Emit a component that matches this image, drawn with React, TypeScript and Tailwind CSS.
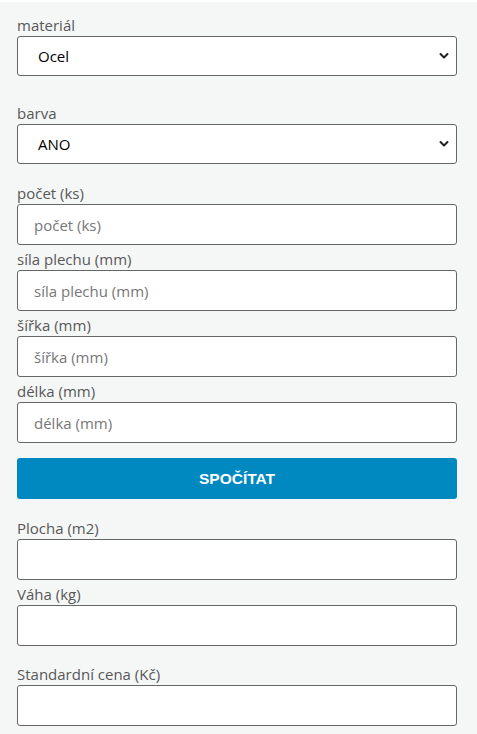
import React from "react";

const labelCls = "block pt-1 mb-px text-[15px] leading-5 text-[#585858]";
const boxCls =
  "block w-full h-[41px] rounded-[3px] border border-[#666] bg-white px-4 text-[15px] text-black placeholder:text-[#777] outline-none";

function Chevron() {
  return (
    <svg
      className="pointer-events-none absolute right-[8px] top-1/2 -translate-y-1/2"
      width="10"
      height="7"
      viewBox="0 0 10 7"
      fill="none"
    >
      <path d="M1.5 1.5 L5 5 L8.5 1.5" stroke="#222" strokeWidth="2" strokeLinecap="round" strokeLinejoin="round" />
    </svg>
  );
}

function SelectField({ label, value, options }: { label: string; value: string; options: string[] }) {
  return (
    <div>
      <label className={labelCls}>{label}</label>
      <div className="relative">
        <select
          defaultValue={value}
          className="block w-full h-[40px] appearance-none rounded-[3px] border border-[#666] bg-white pl-5 pr-8 text-[15px] text-black outline-none"
        >
          {options.map((o) => (
            <option key={o}>{o}</option>
          ))}
        </select>
        <Chevron />
      </div>
    </div>
  );
}

function InputField({ label, placeholder = "" }: { label: string; placeholder?: string }) {
  return (
    <div>
      <label className={labelCls}>{label}</label>
      <input type="text" placeholder={placeholder} className={boxCls} />
    </div>
  );
}

export default function App() {
  return (
    <div
      className="min-h-[734px] w-full border-t-2 border-white bg-[#f5f7f7] pl-[17px] pr-[20px] pt-[9px]"
      style={{ fontFamily: '"Open Sans", "Noto Sans", sans-serif' }}
    >
      <SelectField label="materiál" value="Ocel" options={["Ocel", "Nerez", "Hliník"]} />
      <div className="mt-[23px]">
        <SelectField label="barva" value="ANO" options={["ANO", "NE"]} />
      </div>
      <div className="mt-[15px]">
        <InputField label="počet (ks)" placeholder="počet (ks)" />
      </div>
      <InputField label="síla plechu (mm)" placeholder="síla plechu (mm)" />
      <InputField label="šířka (mm)" placeholder="šířka (mm)" />
      <InputField label="délka (mm)" placeholder="délka (mm)" />
      <button
        type="button"
        className="mt-[15px] block h-[41px] w-full rounded-[3px] bg-[#0088c1] text-[15.5px] font-bold text-white"
        style={{ fontFamily: '"Liberation Sans", Arial, sans-serif' }}
      >
        SPOČÍTAT
      </button>
      <div className="mt-[15px]">
        <InputField label="Plocha (m2)" />
      </div>
      <InputField label="Váha (kg)" />
      <div className="mt-[14px]">
        <InputField label="Standardní cena (Kč)" />
      </div>
    </div>
  );
}
